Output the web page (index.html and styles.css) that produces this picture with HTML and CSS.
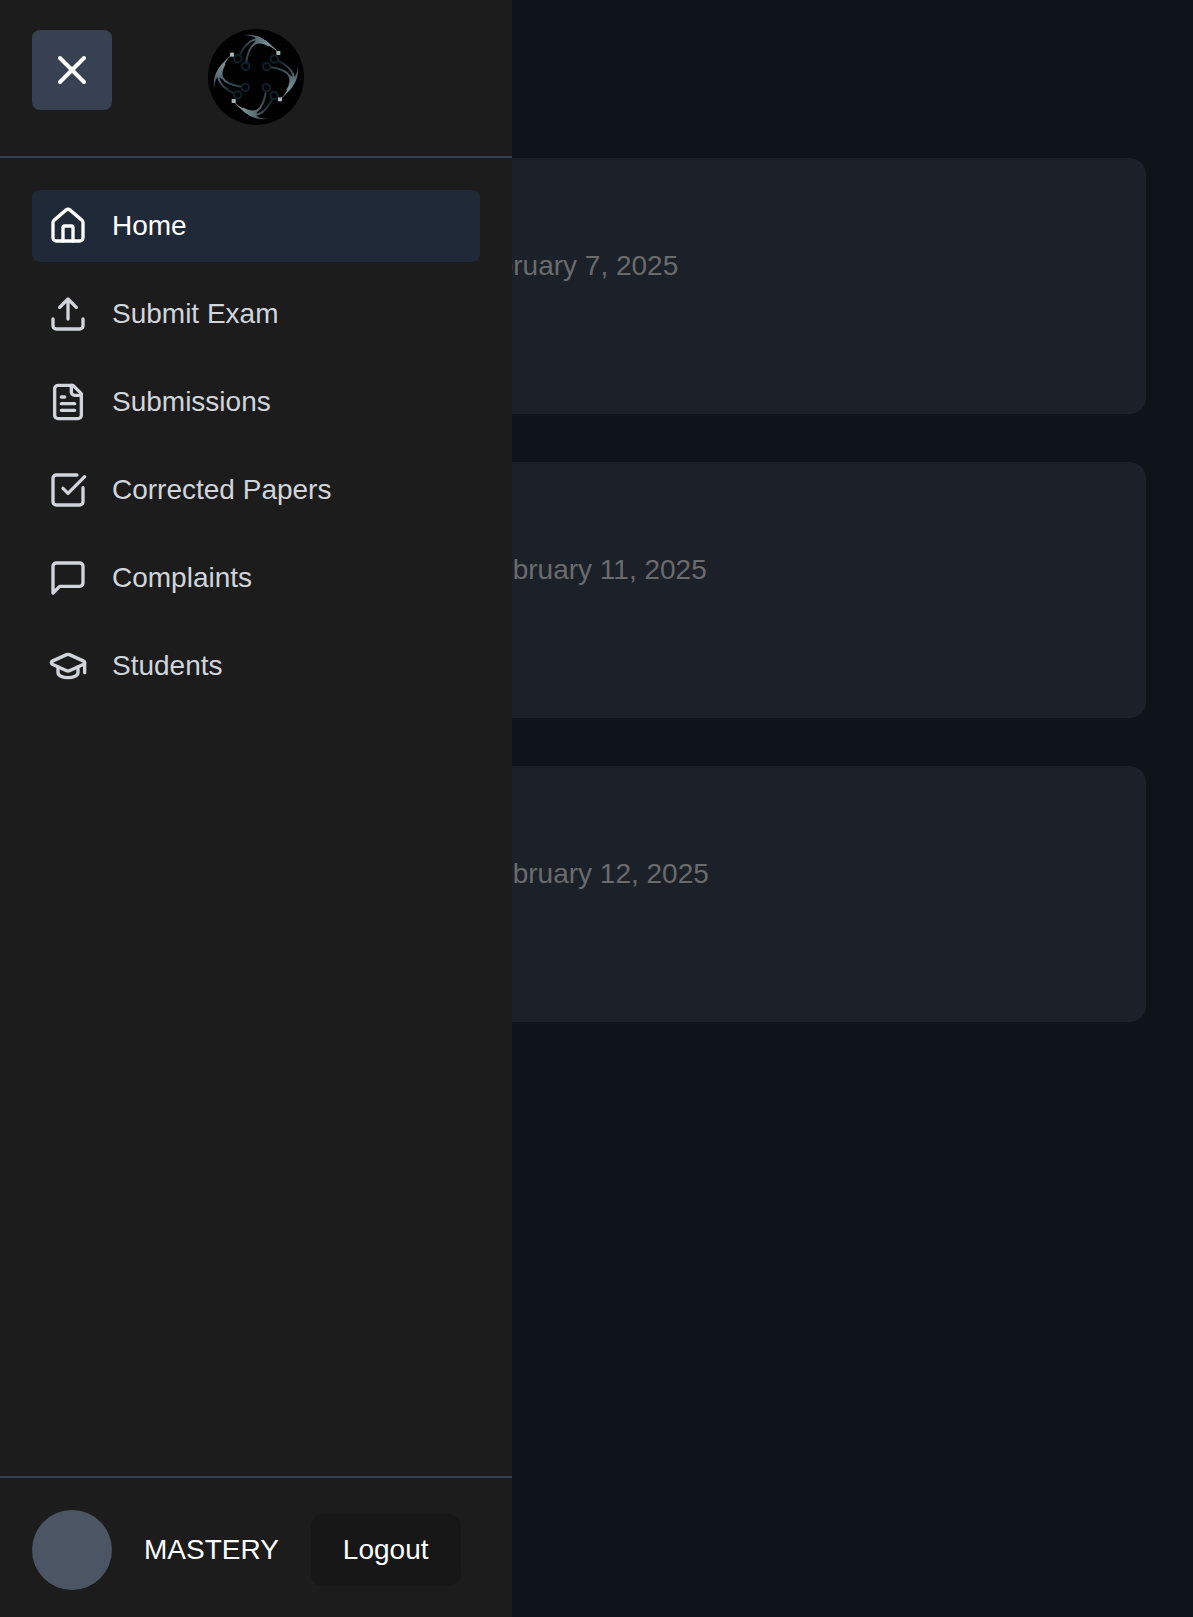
FILE: index.html
```html
<!DOCTYPE html>
<html lang="en">
<head>
  <meta charset="UTF-8" />
  <meta name="viewport" content="width=device-width, initial-scale=1.0" />
  <title>Home</title>
  <link rel="stylesheet" href="styles.css">
</head>
<body>
  <main class="content">
    <article class="card"><time datetime="2025-02-07">February 7, 2025</time></article>
    <article class="card card-late"><time datetime="2025-02-11">February 11, 2025</time></article>
    <article class="card card-late"><time datetime="2025-02-12">February 12, 2025</time></article>
  </main>

  <aside class="sidebar">
    <header class="sidebar-header">
      <button class="close-button" type="button" aria-label="Close menu">
        <svg class="close-icon" viewBox="0 0 24 24"><path d="M18 6 6 18M6 6l12 12"/></svg>
      </button>
      <svg class="logo" viewBox="-144 -144 288 288" aria-hidden="true">
        <defs>
          <linearGradient id="strand" gradientUnits="userSpaceOnUse" x1="69" y1="-72" x2="-50" y2="-72">
            <stop offset="0" stop-color="#94a5ab"/>
            <stop offset="0.5" stop-color="#62767e"/>
            <stop offset="1" stop-color="#0c2430"/>
          </linearGradient>
          <g id="arm">
            <path d="M69 -72C44 -98 14 -134 -36 -125C-14 -124 -4 -120 0 -114C-2 -106 -6 -102 -10 -98Q14 -110 34 -97Q52 -88 69 -72Z" fill="url(#strand)"/>
            <g fill="none" stroke="url(#strand)" stroke-width="6">
              <path d="M36 -100C4 -124 -24 -116 -50 -65"/>
              <path d="M40 -94C8 -112 -20 -110 -30 -42"/>
            </g>
            <g fill="none" stroke="#0a222c" stroke-width="6">
              <circle cx="-54" cy="-55" r="11"/>
              <circle cx="-31" cy="-32" r="11"/>
            </g>
            <rect x="61" y="-78" width="12" height="12" fill="#a3b4ba"/>
          </g>
        </defs>
        <circle r="144" fill="#000"/>
        <use href="#arm"/>
        <use href="#arm" transform="rotate(90)"/>
        <use href="#arm" transform="rotate(180)"/>
        <use href="#arm" transform="rotate(270)"/>
      </svg>
    </header>

    <nav class="nav">
      <a class="nav-link active" href="#home">
        <svg class="icon" viewBox="0 0 24 24"><path d="M15 21v-8a1 1 0 0 0-1-1h-4a1 1 0 0 0-1 1v8"/><path d="M3 10a2 2 0 0 1 .709-1.528l7-5.999a2 2 0 0 1 2.582 0l7 5.999A2 2 0 0 1 21 10v9a2 2 0 0 1-2 2H5a2 2 0 0 1-2-2z"/></svg>
        <span>Home</span>
      </a>
      <a class="nav-link" href="#submit-exam">
        <svg class="icon" viewBox="0 0 24 24"><path d="M21 15v4a2 2 0 0 1-2 2H5a2 2 0 0 1-2-2v-4"/><path d="m17 8-5-5-5 5M12 3v12"/></svg>
        <span>Submit Exam</span>
      </a>
      <a class="nav-link" href="#submissions">
        <svg class="icon" viewBox="0 0 24 24"><path d="M15 2H6a2 2 0 0 0-2 2v16a2 2 0 0 0 2 2h12a2 2 0 0 0 2-2V7Z"/><path d="M14 2v4a2 2 0 0 0 2 2h4M10 9H8M16 13H8M16 17H8"/></svg>
        <span>Submissions</span>
      </a>
      <a class="nav-link" href="#corrected-papers">
        <svg class="icon" viewBox="0 0 24 24"><path d="M21 10.656V19a2 2 0 0 1-2 2H5a2 2 0 0 1-2-2V5a2 2 0 0 1 2-2h12.344"/><path d="m9 11 3 3L22 4"/></svg>
        <span>Corrected Papers</span>
      </a>
      <a class="nav-link" href="#complaints">
        <svg class="icon" viewBox="0 0 24 24"><path d="M21 15a2 2 0 0 1-2 2H7l-4 4V5a2 2 0 0 1 2-2h14a2 2 0 0 1 2 2z"/></svg>
        <span>Complaints</span>
      </a>
      <a class="nav-link" href="#students">
        <svg class="icon" viewBox="0 0 24 24"><path d="M21.42 10.922a1 1 0 0 0-.019-1.838L12.83 5.18a2 2 0 0 0-1.66 0L2.6 9.08a1 1 0 0 0 0 1.832l8.57 3.908a2 2 0 0 0 1.66 0z"/><path d="M22 10v6M6 12.5V16a6 3 0 0 0 12 0v-3.5"/></svg>
        <span>Students</span>
      </a>
    </nav>

    <footer class="sidebar-footer">
      <div class="avatar"></div>
      <span>MASTERY</span>
      <button class="logout-button" type="button">Logout</button>
    </footer>
  </aside>
</body>
</html>
```
FILE: styles.css
```css
* {
  box-sizing: border-box;
}
body {
  margin: 0;
  min-height: 100vh;
  background: #0f131a;
  color: #fff;
  font-family: "Liberation Sans", Arial, sans-serif;
  font-size: 28px;
  line-height: 40px;
}
button {
  border: none;
  color: inherit;
  font: inherit;
  cursor: pointer;
}

/* page behind the menu */
.content {
  display: flex;
  flex-direction: column;
  gap: 48px;
  padding: 158px 47px 48px;
}
.card {
  min-height: 256px;
  padding: 88px 48px 48px 418px;
  border-radius: 16px;
  background: #1c2028;
  color: #6a6b6d;
}
.card-late {
  padding-left: 433px;
}

/* slide-in menu */
.sidebar {
  position: fixed;
  top: 0;
  bottom: 0;
  left: 0;
  display: flex;
  flex-direction: column;
  width: 512px;
  background: #1c1c1c;
}
.sidebar-header {
  display: grid;
  grid-template-columns: 80px 1fr 80px;
  align-items: start;
  padding: 29px 32px 31px;
  border-bottom: 2px solid #374151;
}
.close-button {
  display: flex;
  align-items: center;
  justify-content: center;
  width: 80px;
  height: 80px;
  margin-top: 1px;
  padding: 0;
  border-radius: 8px;
  background: #374151;
}
.close-icon, .icon {
  flex: none;
  fill: none;
  stroke: currentColor;
  stroke-width: 2;
  stroke-linecap: round;
  stroke-linejoin: round;
}
.close-icon {
  width: 48px;
  height: 48px;
}
.logo {
  justify-self: center;
  width: 96px;
  height: 96px;
}
.nav {
  display: flex;
  flex: 1;
  flex-direction: column;
  gap: 16px;
  padding: 32px;
}
.nav-link {
  display: flex;
  align-items: center;
  gap: 24px;
  padding: 16px;
  border-radius: 8px;
  color: #d1d5db;
  text-decoration: none;
}
.nav-link.active {
  background: #1f2937;
  color: #fff;
}
.icon {
  width: 40px;
  height: 40px;
}
.sidebar-footer {
  display: flex;
  align-items: center;
  gap: 32px;
  padding: 32px 32px 27px;
  border-top: 2px solid #374151;
}
.avatar {
  width: 80px;
  height: 80px;
  border-radius: 50%;
  background: #4b5563;
}
.logout-button {
  padding: 16px 32px;
  border-radius: 12px;
  background: #171717;
}
```
